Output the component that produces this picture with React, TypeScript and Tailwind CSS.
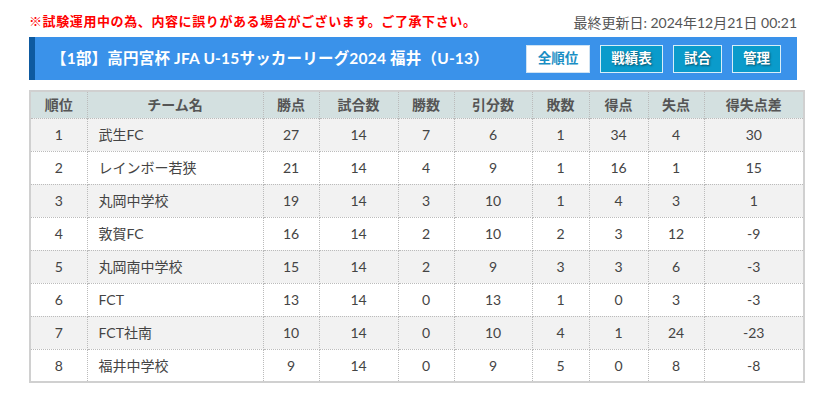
const rows = [
  [1, "武生FC", 27, 14, 7, 6, 1, 34, 4, 30],
  [2, "レインボー若狭", 21, 14, 4, 9, 1, 16, 1, 15],
  [3, "丸岡中学校", 19, 14, 3, 10, 1, 4, 3, 1],
  [4, "敦賀FC", 16, 14, 2, 10, 2, 3, 12, -9],
  [5, "丸岡南中学校", 15, 14, 2, 9, 3, 3, 6, -3],
  [6, "FCT", 13, 14, 0, 13, 1, 0, 3, -3],
  [7, "FCT社南", 10, 14, 0, 10, 4, 1, 24, -23],
  [8, "福井中学校", 9, 14, 0, 9, 5, 0, 8, -8],
];

const heads = ["順位", "チーム名", "勝点", "試合数", "勝数", "引分数", "敗数", "得点", "失点", "得失点差"];
const widths = ["w-[57px]", "w-[176px]", "w-[56px]", "w-[79px]", "w-[56px]", "w-[78px]", "w-[57px]", "w-[59px]", "w-[56px]", "w-[100px]"];

export default function App() {
  return (
    <div className="w-[819px] h-[397px] bg-white font-['Lato','Noto_Sans_CJK_JP',sans-serif] text-[#444]">
      <div className="pl-[29px] pr-[22px] pt-[12px]">
        <div className="flex items-center justify-between h-[20px]">
          <p className="text-[13px] font-bold text-[#ff0000] tracking-[0.6px]">
            ※試験運用中の為、内容に誤りがある場合がございます。ご了承下さい。
          </p>
          <p className="text-[14px] text-[#555]">最終更新日: 2024年12月21日 00:21</p>
        </div>

        {/* title bar */}
        <div className="mt-[5px] h-[43px] flex items-center bg-[#3a92ea] border-l-[6px] border-[#0e5aa0] pl-[16px] pr-[16px]">
          <h1 className="flex-1 text-white font-bold text-[15.5px] tracking-[0.2px]">
            【1部】高円宮杯 JFA U-15サッカーリーグ2024 福井（U-13）
          </h1>
          <div className="flex gap-[10px]">
            <button className="h-[28px] w-[64px] bg-white border border-[#cfe3f3] text-[#1a8ec4] text-[13.5px] font-bold">全順位</button>
            <button className="h-[28px] w-[63px] bg-[#0a9bcb] border border-[#d8eef8] text-white text-[13.5px] font-bold [text-shadow:1px_1px_2px_rgba(0,0,0,0.5)]">戦績表</button>
            <button className="h-[28px] w-[49px] bg-[#0a9bcb] border border-[#d8eef8] text-white text-[13.5px] font-bold [text-shadow:1px_1px_2px_rgba(0,0,0,0.5)]">試合</button>
            <button className="h-[28px] w-[49px] bg-[#0a9bcb] border border-[#d8eef8] text-white text-[13.5px] font-bold [text-shadow:1px_1px_2px_rgba(0,0,0,0.5)]">管理</button>
          </div>
        </div>

        {/* standings table */}
        <table className="mt-[10px] w-[774px] border-collapse border-2 border-[#d0d0d0] text-[14px] table-fixed">
          <thead>
            <tr className="h-[27px] bg-[#d3e0e0]">
              {heads.map((h, i) => (
                <th key={h} className={`${widths[i]} font-bold text-[#555] text-center border-l border-dotted border-[#bbb] first:border-l-0`}>
                  {h}
                </th>
              ))}
            </tr>
          </thead>
          <tbody>
            {rows.map((r, ri) => (
              <tr key={ri} className={`h-[33px] ${ri % 2 === 0 ? "bg-[#f2f2f2]" : "bg-white"}`}>
                {r.map((c, ci) => (
                  <td
                    key={ci}
                    className={`border border-dotted border-[#bbb] ${ci === 1 ? "text-left pl-[11px]" : "text-center"}`}
                  >
                    {c}
                  </td>
                ))}
              </tr>
            ))}
          </tbody>
        </table>
      </div>
    </div>
  );
}
